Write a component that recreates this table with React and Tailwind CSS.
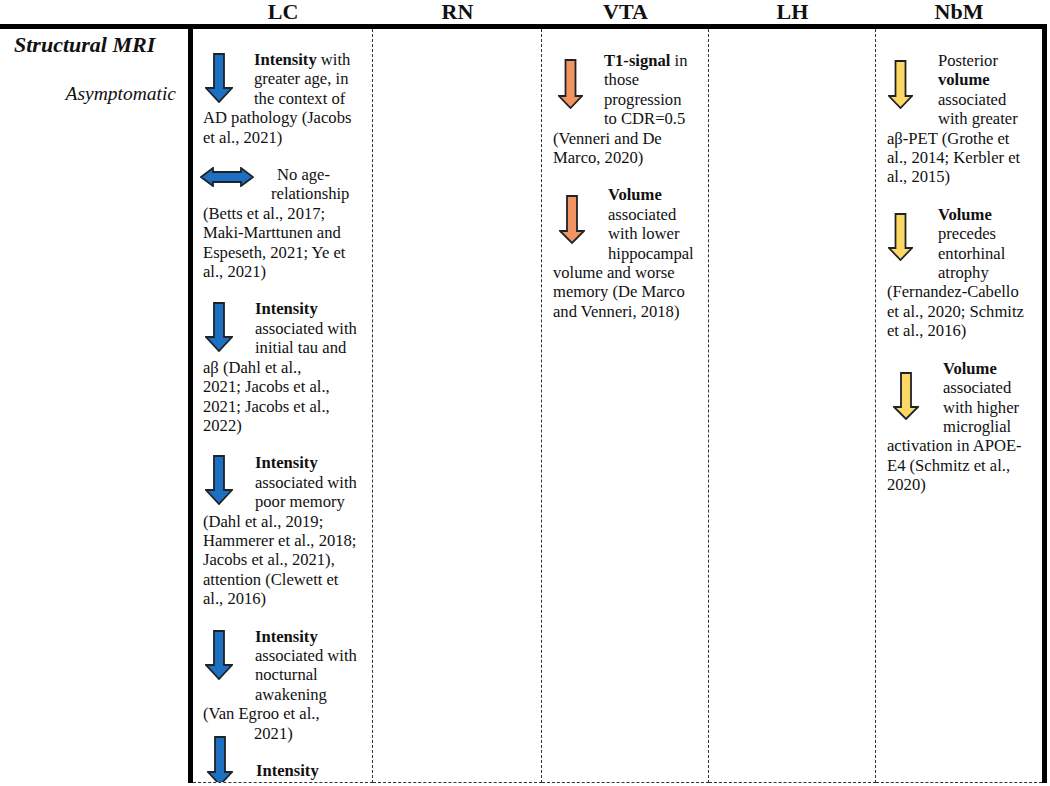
import React from 'react';

const BLUE = '#1d6fc2';
const ORANGE = '#f29462';
const YELLOW = '#fed865';

function DownArrow({ w = 28, h = 50, head = 14, fill = BLUE }) {
  const sl = (w - 10) / 2;
  const sr = (w + 10) / 2;
  const hy = h - head - 1;
  const pts = `${sl},1 ${sr},1 ${sr},${hy} ${w - 1},${hy} ${w / 2},${h - 1} 1,${hy} ${sl},${hy}`;
  return (
    <svg width={w} height={h} viewBox={`0 0 ${w} ${h}`} className="block">
      <polygon points={pts} fill={fill} stroke="#1e2328" strokeWidth="1.8" strokeLinejoin="miter" />
    </svg>
  );
}

function BothArrow() {
  return (
    <svg width="54" height="20" viewBox="0 0 54 20" className="block -ml-[3px]">
      <polygon
        points="1,10 13,1 13,5 41,5 41,1 53,10 41,19 41,15 13,15 13,19"
        fill={BLUE}
        stroke="#1e2328"
        strokeWidth="1.8"
      />
    </svg>
  );
}

function Entry({ floatCls, arrow, className = '', children }) {
  return (
    <div className={`flow-root ${className}`}>
      <div className={floatCls}>{arrow}</div>
      <p>{children}</p>
    </div>
  );
}

export default function App() {
  return (
    <div className="w-[1050px] h-[786px] bg-white text-[#111] font-['Liberation_Serif',serif] overflow-hidden">
      {/* column headings */}
      <div className="flex h-[24px] text-[22px] font-bold leading-[24px]">
        <div className="w-[193px]" />
        <div className="w-[180px] text-center">LC</div>
        <div className="w-[169px] text-center">RN</div>
        <div className="w-[167px] text-center">VTA</div>
        <div className="w-[167px] text-center">LH</div>
        <div className="w-[166px] text-center">NbM</div>
      </div>

      <div className="flex w-[1047px] h-[759px] border-t-[5px] border-black">
        {/* row labels */}
        <div className="w-[188px] pl-[14px] pr-[12px] pt-[3px]">
          <div className="text-[22px] leading-[26px] font-bold italic">Structural MRI</div>
          <div className="mt-[24px] text-right text-[19.5px] leading-[24px] italic">Asymptomatic</div>
        </div>
        <div className="w-[5px] bg-black" />

        {/* LC */}
        <div className="w-[180px] border-r border-b border-dashed border-[#333] pl-[10px] pt-[21px] text-[16.6px] leading-[19.4px] overflow-hidden">
          <Entry floatCls="float-left w-[51px] h-[56px] pt-[3px] pl-[2px]" arrow={<DownArrow />}>
            <b>Intensity</b> with<br />greater age, in<br />the context of<br />AD pathology (Jacobs<br />et al., 2021)
          </Entry>
          <Entry className="mt-[18px]" floatCls="float-left w-[68px] h-[37px] pt-[2px]" arrow={<BothArrow />}>
            <span className="inline-block w-[6px]" />No age-<br />relationship<br />(Betts et al., 2017;<br />Maki-Marttunen and<br />Espeseth, 2021; Ye et<br />al., 2021)
          </Entry>
          <Entry className="mt-[18px]" floatCls="float-left w-[52px] h-[56px] pt-[3px] pl-[2px]" arrow={<DownArrow />}>
            <b>Intensity</b><br />associated with<br />initial tau and<br />aβ (Dahl et al.,<br />2021; Jacobs et al.,<br />2021; Jacobs et al.,<br />2022)
          </Entry>
          <Entry className="mt-[18px]" floatCls="float-left w-[52px] h-[56px] pt-[2px] pl-[2px]" arrow={<DownArrow />}>
            <b>Intensity</b><br />associated with<br />poor memory<br />(Dahl et al., 2019;<br />Hammerer et al., 2018;<br />Jacobs et al., 2021),<br />attention (Clewett et<br />al., 2016)
          </Entry>
          <Entry className="mt-[18px]" floatCls="float-left w-[52px] h-[75px] pt-[3px] pl-[2px]" arrow={<DownArrow />}>
            <b>Intensity</b><br />associated with<br />nocturnal<br />awakening<br />(Van Egroo et al.,<br /><span className="inline-block w-[51px]" />2021)
          </Entry>
          <Entry className="mt-[18px]" floatCls="float-left w-[53px] h-[50px] -mt-[25px] pl-[4px]" arrow={<DownArrow w={26} head={13} />}>
            <b>Intensity</b>
          </Entry>
        </div>

        {/* RN */}
        <div className="w-[169px] border-r border-b border-dashed border-[#333]" />

        {/* VTA */}
        <div className="w-[167px] border-r border-b border-dashed border-[#333] pl-[11px] pt-[22px] text-[16.6px] leading-[19.4px]">
          <Entry floatCls="float-left w-[51px] h-[75px] pt-[8px] pl-[5px]" arrow={<DownArrow w={25} head={12} fill={ORANGE} />}>
            <b>T1-signal</b> in<br />those<br />progression<br />to CDR=0.5<br />(Venneri and De<br />Marco, 2020)
          </Entry>
          <Entry className="mt-[18px]" floatCls="float-left w-[55px] h-[75px] pt-[10px] pl-[6px]" arrow={<DownArrow w={26} h={49} head={12} fill={ORANGE} />}>
            <b>Volume</b><br />associated<br />with lower<br />hippocampal<br />volume and worse<br />memory (De Marco<br />and Venneri, 2018)
          </Entry>
        </div>

        {/* LH */}
        <div className="w-[167px] border-r border-b border-dashed border-[#333]" />

        {/* NbM */}
        <div className="w-[166px] border-b border-dashed border-[#333] pl-[11px] pt-[22px] text-[16.6px] leading-[19.4px]">
          <Entry floatCls="float-left w-[51px] h-[75px] pt-[9px] pl-[1px]" arrow={<DownArrow w={25} h={49} head={12} fill={YELLOW} />}>
            Posterior<br /><b>volume</b><br />associated<br />with greater<br />aβ-PET (Grothe et<br />al., 2014; Kerbler et<br />al., 2015)
          </Entry>
          <Entry className="mt-[18px]" floatCls="float-left w-[51px] h-[75px] pt-[8px] pl-[1px]" arrow={<DownArrow w={25} h={48} head={12} fill={YELLOW} />}>
            <b>Volume</b><br />precedes<br />entorhinal<br />atrophy<br />(Fernandez-Cabello<br />et al., 2020; Schmitz<br />et al., 2016)
          </Entry>
          <Entry className="mt-[18px]" floatCls="float-left w-[56px] h-[75px] pt-[13px] pl-[6px]" arrow={<DownArrow w={26} h={48} head={12} fill={YELLOW} />}>
            <b>Volume</b><br />associated<br />with higher<br />microglial<br />activation in APOE-<br />E4 (Schmitz et al.,<br />2020)
          </Entry>
        </div>
        <div className="w-[5px] bg-black" />
      </div>
    </div>
  );
}
